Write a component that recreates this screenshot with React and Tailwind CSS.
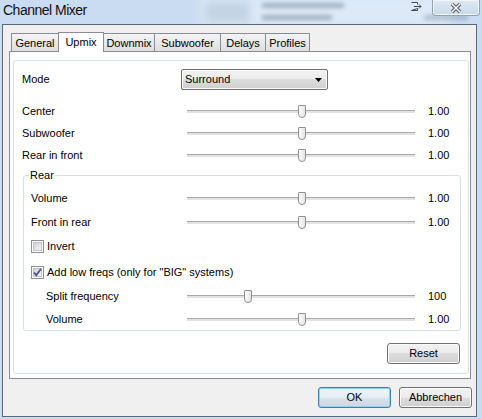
import React from "react";

const FONT = "font-['Liberation_Sans',Arial,sans-serif]";

const TABS = [
  { label: "General", w: "w-[48px]" },
  { label: "Upmix", w: "w-[46px]", active: true },
  { label: "Downmix", w: "w-[52px]" },
  { label: "Subwoofer", w: "w-[67px]" },
  { label: "Delays", w: "w-[46px]" },
  { label: "Profiles", w: "w-[45px]" },
];

// classic Win7 push button face
const BTN =
  "flex h-[21px] w-[73px] items-center justify-center rounded-[3px] border border-[#707070] bg-[linear-gradient(#f2f2f2,#ebebeb_50%,#dddddd_50%,#cfcfcf)] shadow-[inset_0_0_0_1px_#fbfbfb]";

function Slider({ pct }) {
  return (
    <div className="flex h-full w-[240px] items-center px-[6px]">
      <div className="relative h-[3px] flex-1 border-t border-[#a9a9a9] bg-[#e2e2e2]">
        <div
          className="absolute top-[-6px] h-[13px] w-[8px] rounded-t-[1px] rounded-b-[4px] border border-[#8e8f8f] bg-[linear-gradient(90deg,#fdfdfd,#e4e4e4)]"
          style={{ left: `calc(${pct}% - 4px)` }}
        />
      </div>
    </div>
  );
}

function SliderRow({ label, value, pct, labelClass, rowClass = "h-[22px]" }) {
  return (
    <div className={`flex items-center ${rowClass}`}>
      <div className={labelClass}>{label}</div>
      <Slider pct={pct} />
      <div className="pl-[7px]">{value}</div>
    </div>
  );
}

function Checkbox({ checked }) {
  return (
    <span className="relative flex h-[13px] w-[13px] shrink-0 items-center justify-center border border-[#8e8f8f] bg-white">
      <span className="h-[9px] w-[9px] border border-[#c3c3c3] bg-[linear-gradient(135deg,#cfd2d6,#f4f4f4)]" />
      {checked && (
        <svg
          className="absolute left-0 top-0"
          width="11"
          height="11"
          viewBox="0 0 11 11"
        >
          <path
            d="M2 5.5 L4.3 8.2 L9 1.8"
            fill="none"
            stroke="#3f5896"
            strokeWidth="1.8"
          />
        </svg>
      )}
    </span>
  );
}

function TitleBar() {
  return (
    <div className="relative flex h-[24px] items-start overflow-hidden pr-[2px]">
      {/* glass blur of whatever sits behind the window */}
      <div className="absolute left-[200px] top-[-4px] h-[30px] w-[250px] bg-[#e6eff9] opacity-70 blur-[5px]" />
      <div className="absolute left-[205px] top-[2px] h-[20px] w-[45px] bg-[#9db1c9] opacity-40 blur-[4px]" />
      <div className="absolute left-[262px] top-[3px] h-[5px] w-[82px] bg-[#4e5d72] opacity-40 blur-[2px]" />
      <div className="absolute left-[262px] top-[15px] h-[5px] w-[70px] bg-[#4e5d72] opacity-40 blur-[2px]" />
      <div className="absolute left-[424px] top-[15px] h-[5px] w-[44px] bg-[#4e5d72] opacity-30 blur-[2px]" />

      <div className="relative pl-[3px] pt-[2px] text-[14px] leading-[16px] tracking-[-0.5px] text-[#111]">
        Channel Mixer
      </div>
      <div className="relative ml-auto flex items-start">
        <svg className="mr-[10px] mt-[2px]" width="11" height="9" viewBox="0 0 11 9">
          <path d="M0.5 0.5 H6.5 V2.5 M6.5 6.5 V8.5 H0.5 Z" fill="#fff" stroke="#3e4756" />
          <path d="M3 4.5 H10 M8 2.5 L10 4.5 L8 6.5" fill="none" stroke="#3e4756" />
        </svg>
        <div className="flex h-[16px] w-[48px] items-center justify-center rounded-b-[4px] border border-t-0 border-[#8fa2ba] bg-[linear-gradient(#dfe9f5,#cbd9ea)] shadow-[inset_0_0_0_1px_#f1f6fb]">
          <svg width="12" height="10" viewBox="0 0 12 10">
            <path d="M2 1 L10 9 M10 1 L2 9" stroke="#4b5566" strokeWidth="3.4" />
            <path d="M2 1 L10 9 M10 1 L2 9" stroke="#fff" strokeWidth="1.6" />
          </svg>
        </div>
      </div>
    </div>
  );
}

export default function App() {
  return (
    <div
      className={`${FONT} flex h-[419px] w-[482px] flex-col overflow-hidden bg-[#c9dcf1] text-[11px] leading-[13px] text-black`}
    >
      <TitleBar />

      <div className="mb-[2px] ml-[2px] mr-[5px] flex flex-1 flex-col border border-[#5d6775] bg-[#f0f0f0] pl-[6px] pr-[4px] pt-[7px]">
        {/* tab strip */}
        <div className="relative z-10 -mb-px flex h-[20px] items-end pl-[2px]">
          {TABS.map((tab, i) =>
            tab.active ? (
              <div
                key={tab.label}
                className={`${tab.w} relative z-10 flex h-[20px] items-center justify-center border border-b-0 border-[#898c95] bg-white ${i ? "-ml-px" : ""}`}
              >
                {tab.label}
              </div>
            ) : (
              <div
                key={tab.label}
                className={`${tab.w} flex h-[19px] items-center justify-center border border-[#898c95] bg-[linear-gradient(#f4f4f4,#dedede)] pt-[2px] ${i ? "-ml-px" : ""}`}
              >
                {tab.label}
              </div>
            )
          )}
        </div>

        {/* tab page */}
        <div className="flex h-[328px] w-[462px] flex-col border border-[#898c95] bg-white pb-[4px] pl-[3px] pr-[1px] pt-[8px]">
          <div className="flex flex-1 flex-col rounded-[3px] border border-[#d5dfe5] pb-[9px] pl-[8px] pr-[7px] pt-[8px]">
            <div className="flex h-[21px] items-center">
              <div className="w-[159px]">Mode</div>
              <div className="flex h-[21px] w-[147px] items-center justify-between rounded-[2px] border border-[#707070] bg-[linear-gradient(#f2f2f2,#ebebeb_50%,#dddddd_50%,#cfcfcf)] pl-[3px] pr-[5px] shadow-[inset_0_0_0_1px_#fbfbfb]">
                <span>Surround</span>
                <svg width="7" height="4" viewBox="0 0 7 4">
                  <path d="M0 0 H7 L3.5 4 Z" fill="#000" />
                </svg>
              </div>
            </div>

            <div className="mt-[10px]">
              <SliderRow label="Center" value="1.00" pct={50.5} labelClass="w-[159px]" />
              <SliderRow label="Subwoofer" value="1.00" pct={50.5} labelClass="w-[159px]" />
              <SliderRow label="Rear in front" value="1.00" pct={50.5} labelClass="w-[159px]" />
            </div>

            <fieldset className="ml-[1px] mt-[3px] h-[162px] rounded-[3px] border border-[#d5dfe5] pl-[7px]">
              <legend className="-ml-[2px] px-[1px] leading-[13px]">Rear</legend>
              <div className="pt-[4px]">
                <SliderRow label="Volume" value="1.00" pct={50.5} labelClass="w-[150px]" rowClass="h-[24px]" />
                <SliderRow label="Front in rear" value="1.00" pct={50.5} labelClass="w-[150px]" rowClass="h-[24px]" />
                <div className="flex h-[24px] items-center gap-[3px]">
                  <Checkbox />
                  <span>Invert</span>
                </div>
                <div className="flex h-[26px] items-center gap-[3px] pt-[2px]">
                  <Checkbox checked />
                  <span>Add low freqs (only for "BIG" systems)</span>
                </div>
                <SliderRow label="Split frequency" value="100" pct={26.8} labelClass="w-[150px] pl-[15px]" rowClass="h-[24px]" />
                <SliderRow label="Volume" value="1.00" pct={50.5} labelClass="w-[150px] pl-[15px]" rowClass="h-[22px]" />
              </div>
            </fieldset>

            <div className="mt-[12px] flex justify-end pr-[1px]">
              <button className={BTN}>Reset</button>
            </div>
          </div>
        </div>

        {/* dialog buttons */}
        <div className="mt-[8px] flex justify-end gap-[8px]">
          <button className="flex h-[21px] w-[73px] items-center justify-center rounded-[3px] border border-[#3c7fb1] bg-[linear-gradient(#eef3f7,#e6edf2_50%,#d8e2ea_50%,#ccd8e2)] shadow-[inset_0_0_0_1px_#8fd2f4]">
            OK
          </button>
          <button className={BTN}>Abbrechen</button>
        </div>
      </div>
    </div>
  );
}
